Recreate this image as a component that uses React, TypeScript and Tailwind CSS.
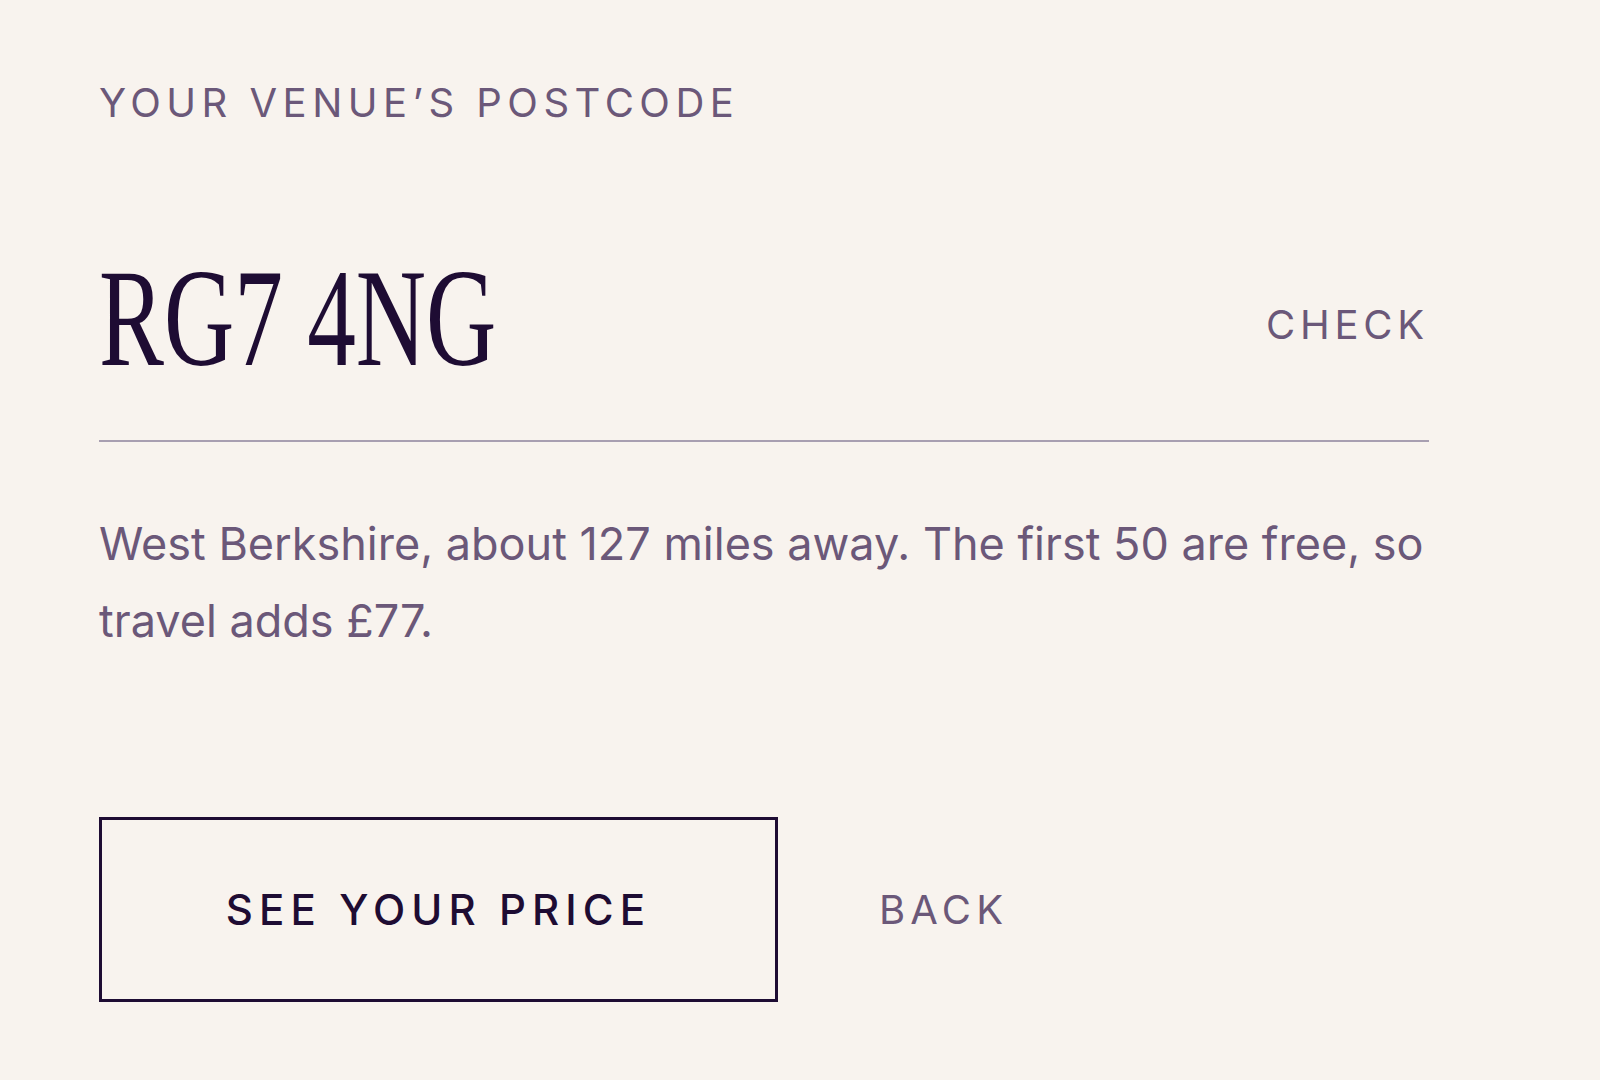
export default function App() {
    return (
        <main className="min-h-screen bg-[#f8f3ee] pl-[99px] pt-[83px] font-['Inter',sans-serif]">
            <div className="w-[1330px]">
                <p className="text-[40px] leading-none tracking-[0.137em] text-[#6b5879] uppercase">
                    Your venue’s postcode
                </p>

                <div className="mt-[126px] flex items-start justify-between border-b-2 border-[#a89fb1] pb-[52px]">
                    <h1 className="origin-left scale-x-70 font-['Liberation_Serif',serif] text-[139px] leading-none text-[#1e0c33]">
                        RG7 4NG
                    </h1>
                    <button className="mt-[56px] text-[40px] leading-none tracking-[0.12em] text-[#6b5879] uppercase">
                        Check
                    </button>
                </div>

                <p className="mt-[63px] text-[45px] leading-[77px] text-[#6b5879]">
                    West Berkshire, about 127 miles away. The first 50 are
                    free, so travel adds £77.
                </p>

                <div className="mt-[158px] flex items-center">
                    <button className="flex h-[185px] w-[679px] items-center justify-center border-[3px] border-[#1e0c33] text-[42px] font-medium leading-none tracking-[0.145em] text-[#1e0c33] uppercase">
                        See your price
                    </button>
                    <button className="ml-[101px] text-[40px] leading-none tracking-[0.13em] text-[#6b5879] uppercase">
                        Back
                    </button>
                </div>
            </div>
        </main>
    );
}
